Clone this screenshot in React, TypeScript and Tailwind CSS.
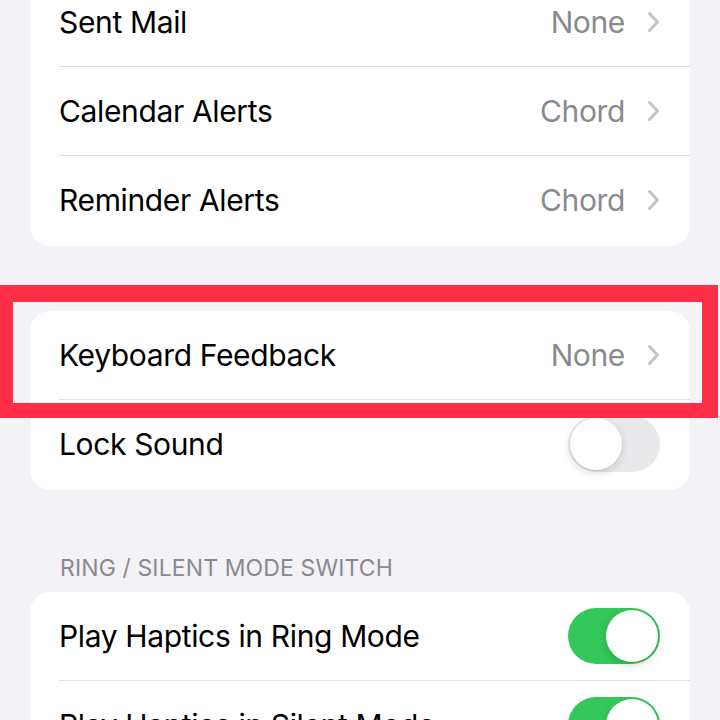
import React from "react";

type Row =
  | { label: string; value: string }
  | { label: string; toggle: boolean };

function Chevron(): React.JSX.Element {
  return (
    <svg width="13" height="22" viewBox="0 0 13 22" fill="none" className="shrink-0">
      <path
        d="M2.5 2.5 L10.5 11 L2.5 19.5"
        stroke="#c4c4c7"
        strokeWidth={3}
        strokeLinecap="round"
        strokeLinejoin="round"
      />
    </svg>
  );
}

function Toggle({ on }: { on: boolean }): React.JSX.Element {
  return (
    <div
      className={
        on
          ? "flex h-[56px] w-[92px] shrink-0 items-center justify-end rounded-full bg-[#34c759] p-[2px]"
          : "flex h-[56px] w-[92px] shrink-0 items-center justify-start rounded-full bg-[#e9e9eb] p-[2px]"
      }
    >
      <div className="h-[52px] w-[52px] rounded-full bg-white shadow-[0_3px_8px_rgba(0,0,0,0.15),0_1px_1px_rgba(0,0,0,0.06)]" />
    </div>
  );
}

function Card({ rows, className }: { rows: Row[]; className?: string }): React.JSX.Element {
  return (
    <div className={"overflow-hidden rounded-[20px] bg-white pb-[2px] " + (className ?? "")}>
      {rows.map((row, i) => (
        <div key={row.label}>
          <div className="flex h-[88px] items-center justify-between pl-[29px] pr-[30px]">
            <span className="text-[30px] leading-[36px] tracking-[-0.012em] text-black">
              {row.label}
            </span>
            {"value" in row ? (
              <div className="flex items-center gap-[22px]">
                <span className="text-[30px] leading-[36px] tracking-[-0.012em] text-[#8a8a8e]">
                  {row.value}
                </span>
                <Chevron />
              </div>
            ) : (
              <Toggle on={row.toggle} />
            )}
          </div>
          {i < rows.length - 1 && <div className="ml-[29px] h-px bg-[#dedee2]" />}
        </div>
      ))}
    </div>
  );
}

export default function App(): React.JSX.Element {
  return (
    <div className="relative h-[720px] overflow-hidden bg-[#f2f2f7] font-['Inter','Liberation_Sans',sans-serif]">
      <div className="px-[30px]">
        <Card
          className="-mt-[22px]"
          rows={[
            { label: "Sent Mail", value: "None" },
            { label: "Calendar Alerts", value: "Chord" },
            { label: "Reminder Alerts", value: "Chord" },
          ]}
        />
        <Card
          className="mt-[65px]"
          rows={[
            { label: "Keyboard Feedback", value: "None" },
            { label: "Lock Sound", toggle: false },
          ]}
        />
        <div className="pb-[10px] pl-[30px] pt-[64px] text-[23px] leading-[28px] tracking-[0.005em] text-[#8a8a8e]">
          RING / SILENT MODE SWITCH
        </div>
        <Card
          rows={[
            { label: "Play Haptics in Ring Mode", toggle: true },
            { label: "Play Haptics in Silent Mode", toggle: true },
          ]}
        />
      </div>

      {/* highlight annotation */}
      <div className="pointer-events-none absolute left-0 top-[285px] h-[133px] w-[718px] border-b-[15px] border-l-[13px] border-r-[16px] border-t-[17px] border-[#ff2d46]" />
    </div>
  );
}
